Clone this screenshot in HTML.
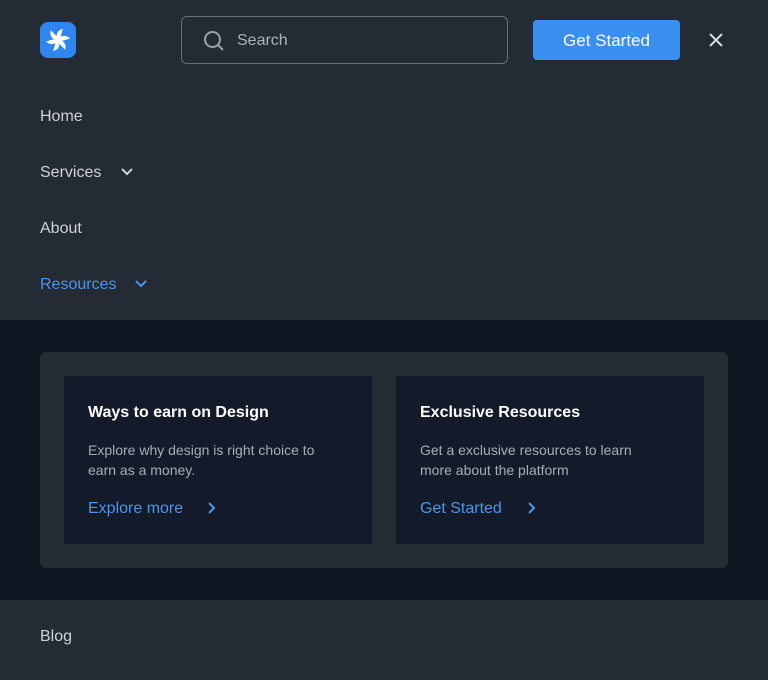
<!DOCTYPE html>
<html><head><style>
*{margin:0;padding:0;box-sizing:border-box}
body{width:768px;height:680px;background:#252b34;font-family:"Liberation Sans",sans-serif;position:relative;overflow:hidden}
.abs{position:absolute}
.logo{left:40px;top:22px;width:36px;height:36px;border-radius:8px;background:#2f86f0}
.search{left:181px;top:16px;width:327px;height:48px;border:1px solid #6b7078;border-radius:6px}
.search span{position:absolute;left:55px;top:15px;color:#aeb3ba;font-size:16px}
.btn{left:533px;top:20px;width:147px;height:40px;background:#3b8ff0;border-radius:4px;color:#fff;font-size:17px;text-align:center;line-height:41px}
.nav{left:40px;color:#cfd3d8;font-size:16px}
.dark{left:0;top:320px;width:768px;height:280px;background:#111722}
.panel{left:40px;top:352px;width:688px;height:216px;background:#262c33;border-radius:6px}
.card{top:376px;width:308px;height:168px;background:#131a2a}
.card h3{position:absolute;left:24px;top:28px;color:#fff;font-size:16px;font-weight:bold}
.card p{position:absolute;left:24px;top:64px;color:#a8adb5;font-size:14px;line-height:20px;width:250px}
.card a{position:absolute;left:24px;top:124px;color:#4a96ea;font-size:16px}
</style></head><body>
<div class="abs logo"><svg width="36" height="36" viewBox="0 0 36 36"><g fill="#fff" transform="translate(18 18)"><path id="b" d="M0 0 C-3 -4 -1 -10 5 -11 C3 -7 4 -3 0 0Z"/><use href="#b" transform="rotate(60)"/><use href="#b" transform="rotate(120)"/><use href="#b" transform="rotate(180)"/><use href="#b" transform="rotate(240)"/><use href="#b" transform="rotate(300)"/></g></svg></div>
<div class="abs search"><svg style="position:absolute;left:20px;top:12px" width="24" height="24" viewBox="0 0 24 24" fill="none" stroke="#9aa0a8" stroke-width="2"><circle cx="10.5" cy="10.5" r="7.5"/><path d="M16 16l5 5"/></svg><span>Search</span></div>
<div class="abs btn">Get Started</div>
<svg class="abs" style="left:708px;top:32px" width="16" height="16" viewBox="0 0 16 16" stroke="#d6d9dd" stroke-width="2"><path d="M2 2l12 12M14 2L2 14"/></svg>
<div class="abs nav" style="top:108px">Home</div>
<div class="abs nav" style="top:164px">Services</div>
<svg class="abs" style="left:120px;top:166px" width="14" height="12" viewBox="0 0 14 12" fill="none" stroke="#cfd3d8" stroke-width="2"><path d="M2 3l5 5 5-5"/></svg>
<div class="abs nav" style="top:220px">About</div>
<div class="abs nav" style="top:276px;color:#4a96ea">Resources</div>
<svg class="abs" style="left:134px;top:278px" width="14" height="12" viewBox="0 0 14 12" fill="none" stroke="#4a96ea" stroke-width="2"><path d="M2 3l5 5 5-5"/></svg>
<div class="abs dark"></div>
<div class="abs panel"></div>
<div class="abs card" style="left:64px"><h3>Ways to earn on Design</h3><p>Explore why design is right choice to earn as a money.</p><a>Explore more</a><svg style="position:absolute;left:143px;top:125px" width="10" height="14" viewBox="0 0 10 14" fill="none" stroke="#4a96ea" stroke-width="2"><path d="M2 2l5 5-5 5"/></svg></div>
<div class="abs card" style="left:396px"><h3>Exclusive Resources</h3><p style="width:235px">Get a exclusive resources to learn more about the platform</p><a>Get Started</a><svg style="position:absolute;left:131px;top:125px" width="10" height="14" viewBox="0 0 10 14" fill="none" stroke="#4a96ea" stroke-width="2"><path d="M2 2l5 5-5 5"/></svg></div>
<div class="abs nav" style="top:628px">Blog</div>
</body></html>
